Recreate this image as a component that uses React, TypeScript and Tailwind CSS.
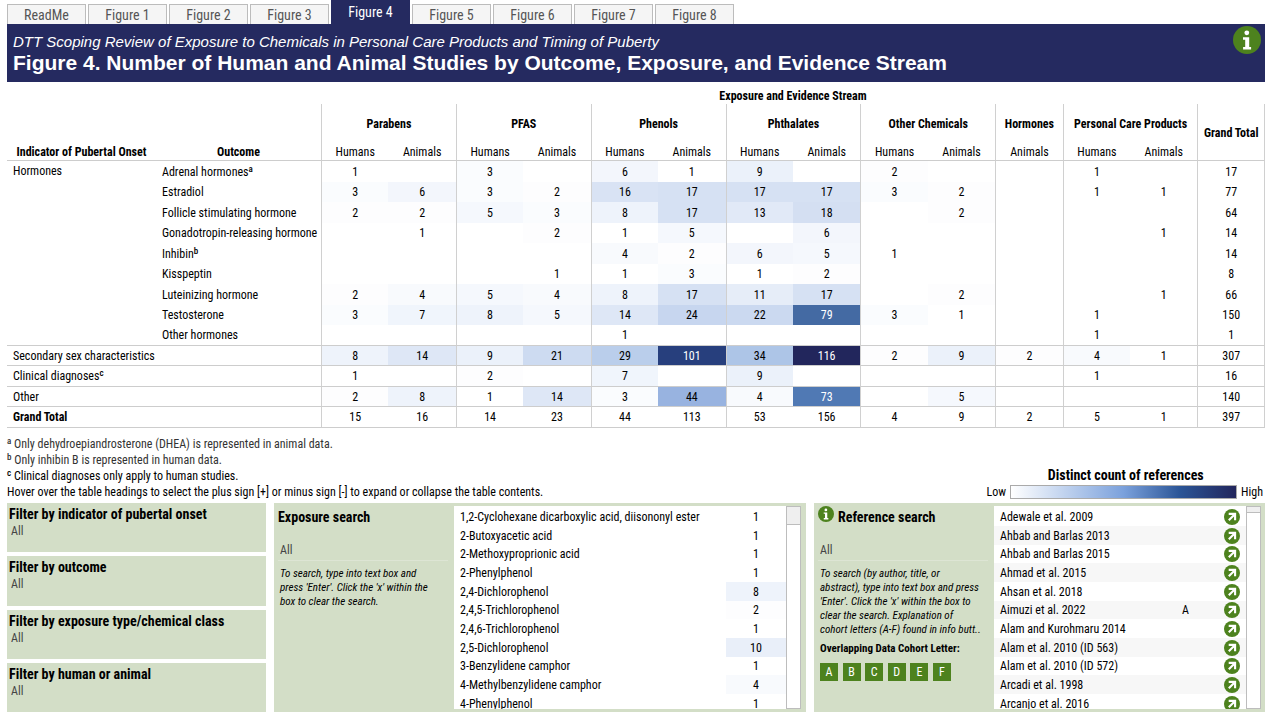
import React from "react";

type Cell = number | null;
type Row = { label?: React.ReactNode; outcome?: React.ReactNode; cells: Cell[]; total: number };

const _ = null;

const hormoneRows: Row[] = [
  { outcome: <>Adrenal hormones<Sup>a</Sup></>, cells: [1, _, 3, _, 6, 1, 9, _, 2, _, _, 1, _], total: 17 },
  { outcome: "Estradiol", cells: [3, 6, 3, 2, 16, 17, 17, 17, 3, 2, _, 1, 1], total: 77 },
  { outcome: "Follicle stimulating hormone", cells: [2, 2, 5, 3, 8, 17, 13, 18, _, 2, _, _, _], total: 64 },
  { outcome: "Gonadotropin-releasing hormone", cells: [_, 1, _, 2, 1, 5, _, 6, _, _, _, _, 1], total: 14 },
  { outcome: <>Inhibin<Sup>b</Sup></>, cells: [_, _, _, _, 4, 2, 6, 5, 1, _, _, _, _], total: 14 },
  { outcome: "Kisspeptin", cells: [_, _, _, 1, 1, 3, 1, 2, _, _, _, _, _], total: 8 },
  { outcome: "Luteinizing hormone", cells: [2, 4, 5, 4, 8, 17, 11, 17, _, 2, _, _, 1], total: 66 },
  { outcome: "Testosterone", cells: [3, 7, 8, 5, 14, 24, 22, 79, 3, 1, _, 1, _], total: 150 },
  { outcome: "Other hormones", cells: [_, _, _, _, 1, _, _, _, _, _, _, 1, _], total: 1 },
];

const summaryRows: Row[] = [
  { label: "Secondary sex characteristics", cells: [8, 14, 9, 21, 29, 101, 34, 116, 2, 9, 2, 4, 1], total: 307 },
  { label: <>Clinical diagnoses<Sup>c</Sup></>, cells: [1, _, 2, _, 7, _, 9, _, _, _, _, 1, _], total: 16 },
  { label: "Other", cells: [2, 8, 1, 14, 3, 44, 4, 73, _, 5, _, _, _], total: 140 },
];

const grandTotals = [15, 16, 14, 23, 44, 113, 53, 156, 4, 9, 2, 5, 1];

const groups = [
  { name: "Parabens", span: 2 },
  { name: "PFAS", span: 2 },
  { name: "Phenols", span: 2 },
  { name: "Phthalates", span: 2 },
  { name: "Other Chemicals", span: 2 },
  { name: "Hormones", span: 1 },
  { name: "Personal Care Products", span: 2 },
];

const streams = ["Humans", "Animals", "Humans", "Animals", "Humans", "Animals", "Humans", "Animals", "Humans", "Animals", "Animals", "Humans", "Animals"];
const groupStarts = new Set([0, 2, 4, 6, 8, 10, 11]);

const exposures: [string, number][] = [
  ["1,2-Cyclohexane dicarboxylic acid, diisononyl ester", 1],
  ["2-Butoxyacetic acid", 1],
  ["2-Methoxyproprionic acid", 1],
  ["2-Phenylphenol", 1],
  ["2,4-Dichlorophenol", 8],
  ["2,4,5-Trichlorophenol", 2],
  ["2,4,6-Trichlorophenol", 1],
  ["2,5-Dichlorophenol", 10],
  ["3-Benzylidene camphor", 1],
  ["4-Methylbenzylidene camphor", 4],
  ["4-Phenylphenol", 1],
];

const references: [string, string][] = [
  ["Adewale et al. 2009", ""],
  ["Ahbab and Barlas 2013", ""],
  ["Ahbab and Barlas 2015", ""],
  ["Ahmad et al. 2015", ""],
  ["Ahsan et al. 2018", ""],
  ["Aimuzi et al. 2022", "A"],
  ["Alam and Kurohmaru 2014", ""],
  ["Alam et al. 2010 (ID 563)", ""],
  ["Alam et al. 2010 (ID 572)", ""],
  ["Arcadi et al. 1998", ""],
  ["Arcanjo et al. 2016", ""],
];

const scale: [number, number[]][] = [
  [1, [255, 255, 255]],
  [8, [238, 243, 251]],
  [17, [214, 225, 243]],
  [24, [199, 214, 239]],
  [34, [173, 197, 231]],
  [44, [152, 179, 224]],
  [73, [80, 121, 180]],
  [79, [68, 106, 163]],
  [101, [39, 63, 125]],
  [116, [34, 38, 92]],
];

function heat(value: Cell): string | undefined {
  if (value === null) return undefined;
  for (let i = 1; i < scale.length; i++) {
    const [hi, to] = scale[i];
    const [lo, from] = scale[i - 1];
    if (value <= hi) {
      const t = (value - lo) / (hi - lo);
      return `rgb(${from.map((c, k) => Math.round(c + (to[k] - c) * t)).join(",")})`;
    }
  }
  return "rgb(34,38,92)";
}

function Sup({ children }: { children: React.ReactNode }) {
  return <sup className="top-0 align-[4px] text-[9px] leading-none font-medium">{children}</sup>;
}

function InfoIcon({ className }: { className: string }) {
  return (
    <svg viewBox="0 0 28 28" className={className} aria-hidden="true">
      <circle cx="14" cy="14" r="14" fill="#4d821e" />
      <circle cx="13.8" cy="6.8" r="2.4" fill="#fff" />
      <path d="M10 11.2h6.2v9.9h1.9v2.5h-8v-2.5h2.1v-7.4H10z" fill="#fff" />
    </svg>
  );
}

function LinkIcon() {
  return (
    <svg viewBox="0 0 16 16" className="size-4" aria-hidden="true">
      <circle cx="8" cy="8" r="8" fill="#4d821e" />
      <path d="M4.7 4.9h6.4v6.4M10.6 5.4L4.8 11.2" fill="none" stroke="#fff" strokeWidth="2.1" />
    </svg>
  );
}

function ValueCells({ cells, total, line, shaded }: { cells: Cell[]; total: number; line: boolean; shaded: boolean }) {
  const bottom = line ? "border-b border-b-[#cdcdcd]" : "";
  return (
    <>
      {cells.map((value, i) => (
        <td
          key={i}
          className={`p-0 text-center ${bottom} ${groupStarts.has(i) ? "border-l border-l-[#d0d0d0]" : ""} ${shaded && value !== null && value > 70 ? "text-white" : ""}`}
          style={shaded ? { backgroundColor: heat(value) } : undefined}
        >
          {value}
        </td>
      ))}
      <td className={`border-x border-x-[#d0d0d0] p-0 text-center ${bottom}`}>{total}</td>
    </>
  );
}

function StudyTable() {
  const rule = "border-b border-b-[#cdcdcd]";
  return (
    <table className="mt-[5px] w-full table-fixed border-separate border-spacing-0 text-[12px] leading-4">
      <colgroup>
        <col className="w-[149px]" />
        <col className="w-[165px]" />
        {streams.map((_s, i) => <col key={i} />)}
        <col />
      </colgroup>
      <thead>
        <tr className="h-[17px]">
          <td colSpan={2} className="p-0" />
          <th colSpan={14} className="p-0 text-center font-bold">Exposure and Evidence Stream</th>
        </tr>
        <tr className="h-[38px]">
          <td colSpan={2} className="p-0" />
          {groups.map((g) => (
            <th key={g.name} colSpan={g.span} scope="colgroup" className="border-l border-l-[#d0d0d0] p-0 pt-[2px] text-center font-bold whitespace-nowrap">
              {g.name}
            </th>
          ))}
          <th rowSpan={2} scope="col" className={`border-x border-x-[#d0d0d0] p-0 pt-[2px] text-center font-bold whitespace-nowrap ${rule}`}>Grand Total</th>
        </tr>
        <tr className="h-[19px]">
          <th scope="col" className={`p-0 pt-[2px] text-center font-bold whitespace-nowrap ${rule}`}>Indicator of Pubertal Onset</th>
          <th scope="col" className={`p-0 pt-[2px] text-center font-bold ${rule}`}>Outcome</th>
          {streams.map((s, i) => (
            <th key={i} scope="col" className={`p-0 pt-[2px] text-center font-normal ${rule} ${groupStarts.has(i) ? "border-l border-l-[#d0d0d0]" : ""}`}>{s}</th>
          ))}
        </tr>
      </thead>
      <tbody>
        {hormoneRows.map((row, i) => {
          const last = i === hormoneRows.length - 1;
          return (
            <tr key={i} className="odd:h-[21px] even:h-[20px]">
              {i === 0 && (
                <th rowSpan={hormoneRows.length} scope="rowgroup" className={`p-0 pt-[2px] pl-[6px] text-left align-top font-normal ${rule}`}>Hormones</th>
              )}
              <th scope="row" className={`p-0 pl-[6px] text-left font-normal whitespace-nowrap ${last ? rule : ""}`}>{row.outcome}</th>
              <ValueCells cells={row.cells} total={row.total} line={last} shaded />
            </tr>
          );
        })}
        {summaryRows.map((row, i) => (
          <tr key={i} className="odd:h-[21px] even:h-[20px]">
            <th colSpan={2} scope="row" className={`p-0 pl-[6px] text-left font-normal ${rule}`}>{row.label}</th>
            <ValueCells cells={row.cells} total={row.total} line shaded />
          </tr>
        ))}
        <tr className="odd:h-[21px] even:h-[20px]">
          <th colSpan={2} scope="row" className={`p-0 pl-[6px] text-left font-bold ${rule}`}>Grand Total</th>
          <ValueCells cells={grandTotals} total={397} line shaded={false} />
        </tr>
      </tbody>
    </table>
  );
}

function Filter({ id, label }: { id: string; label: string }) {
  return (
    <div className="flex flex-1 flex-col bg-[#d3dec7] pt-[2px] pl-[2px]">
      <label htmlFor={id} className="text-[14px] leading-[18px] font-bold">{label}</label>
      <select id={id} className="appearance-none bg-transparent pl-[2px] text-[12px] leading-4 text-[#444]">
        <option>All</option>
      </select>
    </div>
  );
}

function ScrollTrack({ thumb }: { thumb: string }) {
  return (
    <div className="w-[15px] shrink-0 border border-[#bdbdbd] bg-white">
      <div className={`border-b border-[#bdbdbd] bg-[#efefef] ${thumb}`} />
    </div>
  );
}

const tabs = ["ReadMe", "Figure 1", "Figure 2", "Figure 3", "Figure 4", "Figure 5", "Figure 6", "Figure 7", "Figure 8"];

export default function App() {
  return (
    <div className="bg-white px-[7px] font-['Roboto_Condensed','Liberation_Sans_Narrow',Roboto,sans-serif] text-black">
      <nav className="flex h-6 items-end gap-[2px]">
        {tabs.map((t) =>
          t === "Figure 4" ? (
            <button key={t} type="button" className="h-6 w-[79px] bg-[#252a60] text-[14px] leading-5 text-white">{t}</button>
          ) : (
            <button key={t} type="button" className="h-5 w-[79px] border border-b-0 border-[#bcbcbc] bg-[#f5f5f5] text-[14px] leading-[18px] text-[#555]">{t}</button>
          ),
        )}
      </nav>

      <header className="flex h-[58px] items-start justify-between bg-[#252a60] pt-[2px] pr-[4px] pl-[6px] font-['Liberation_Sans',sans-serif] text-white">
        <div className="pt-[6px]">
          <p className="text-[15px] leading-5 italic">DTT Scoping Review of Exposure to Chemicals in Personal Care Products and Timing of Puberty</p>
          <h1 className="text-[21px] leading-[22px] font-bold">Figure 4. Number of Human and Animal Studies by Outcome, Exposure, and Evidence Stream</h1>
        </div>
        <button type="button" aria-label="Information"><InfoIcon className="size-7" /></button>
      </header>

      <StudyTable />

      <div className="flex items-end justify-between pt-2">
        <div className="text-[12px] leading-4">
          <p className="text-[#333]"><Sup>a</Sup> Only dehydroepiandrosterone (DHEA) is represented in animal data.</p>
          <p className="text-[#333]"><Sup>b</Sup> Only inhibin B is represented in human data.</p>
          <p><Sup>c</Sup> Clinical diagnoses only apply to human studies.</p>
          <p>Hover over the table headings to select the plus sign [+] or minus sign [-] to expand or collapse the table contents.</p>
        </div>
        <div className="flex flex-col items-center">
          <h2 className="text-[14px] leading-[18px] font-bold">Distinct count of references</h2>
          <div className="flex items-center gap-1 pr-[2px] text-[12px] leading-4">
            <span>Low</span>
            <div className="h-[14px] w-[227px] border border-[#aaa] bg-[linear-gradient(to_right,#fff,#7ba1dc_50%,#2b5597_75%,#22265c)]" />
            <span>High</span>
          </div>
        </div>
      </div>

      <main className="mt-[3px] grid grid-cols-[259fr_532fr_451fr] grid-rows-[209px] gap-2">
        <section className="flex flex-col gap-1">
          <Filter id="indicator" label="Filter by indicator of pubertal onset" />
          <Filter id="outcome" label="Filter by outcome" />
          <Filter id="exposure-type" label="Filter by exposure type/chemical class" />
          <Filter id="stream" label="Filter by human or animal" />
        </section>

        <section className="flex min-h-0 bg-[#d3dec7] py-[3px] pr-[5px]">
          <div className="flex w-[180px] shrink-0 flex-col pt-px pl-1">
            <label htmlFor="exposure-search" className="text-[14px] leading-5 font-bold">Exposure search</label>
            <input id="exposure-search" type="text" defaultValue="All" className="mt-3 mr-[6px] h-[22px] border-b border-[#dde5d4] bg-transparent pl-[2px] text-[12px] text-[#444] outline-none" />
            <p className="pt-[6px] pr-2 pl-[2px] text-[11px] leading-[14px] italic">To search, type into text box and<br />press 'Enter'. Click the 'x' within the<br />box to clear the search.</p>
          </div>
          <div className="min-w-0 flex-1 overflow-hidden bg-white pt-px">
            <table className="w-full table-fixed border-separate border-spacing-0 text-[12px] leading-4">
              <colgroup><col /><col className="w-[60px]" /></colgroup>
              <tbody>
                {exposures.map(([name, n]) => (
                  <tr key={name} className="h-[19px] [&:nth-child(3n)]:h-[18px]">
                    <td className="p-0 pl-[6px] whitespace-nowrap">{name}</td>
                    <td className="p-0 text-center" style={{ backgroundColor: heat(n) }}>{n}</td>
                  </tr>
                ))}
              </tbody>
            </table>
          </div>
          <ScrollTrack thumb="h-[18px]" />
        </section>

        <section className="flex min-h-0 bg-[#d3dec7] py-[3px] pr-1">
          <div className="flex w-[180px] shrink-0 flex-col pl-1">
            <div className="flex items-start gap-1">
              <button type="button" aria-label="About reference search"><InfoIcon className="size-4" /></button>
              <label htmlFor="reference-search" className="pt-px text-[14px] leading-5 font-bold">Reference search</label>
            </div>
            <input id="reference-search" type="text" defaultValue="All" className="mt-3 mr-[6px] h-[22px] border-b border-[#dde5d4] bg-transparent pl-[2px] text-[12px] text-[#444] outline-none" />
            <p className="pt-[6px] pl-[2px] text-[11px] leading-[14px] whitespace-nowrap italic">To search (by author, title, or<br />abstract), type into text box and press<br />'Enter'. Click the 'x' within the box to<br />clear the search. Explanation of<br />cohort letters (A-F) found in info butt..</p>
            <h3 className="mt-[5px] pl-[2px] text-[11px] leading-[14px] font-bold">Overlapping Data Cohort Letter:</h3>
            <div className="mt-[7px] ml-[2px] flex w-[131px] justify-between">
              {["A", "B", "C", "D", "E", "F"].map((c) => (
                <button key={c} type="button" className="size-[18px] bg-[#4d821e] text-[12px] leading-[18px] text-white">{c}</button>
              ))}
            </div>
          </div>
          <div className="min-w-0 flex-1 overflow-hidden bg-white pt-px">
            <table className="w-full table-fixed border-separate border-spacing-0 text-[12px] leading-4">
              <colgroup><col /><col className="w-[40px]" /><col className="w-[44px]" /></colgroup>
              <tbody>
                {references.map(([name, cohort]) => (
                  <tr key={name} className="h-[19px] even:bg-[#f7f7f7] [&:nth-child(3n)]:h-[18px]">
                    <td className="p-0 pl-[6px] whitespace-nowrap">{name}</td>
                    <td className="p-0 pl-5">{cohort}</td>
                    <td className="p-0 pl-[22px]">
                      <a href="#reference" aria-label={`Open ${name}`} className="block size-4"><LinkIcon /></a>
                    </td>
                  </tr>
                ))}
              </tbody>
            </table>
          </div>
          <ScrollTrack thumb="h-[6px]" />
        </section>
      </main>
    </div>
  );
}
